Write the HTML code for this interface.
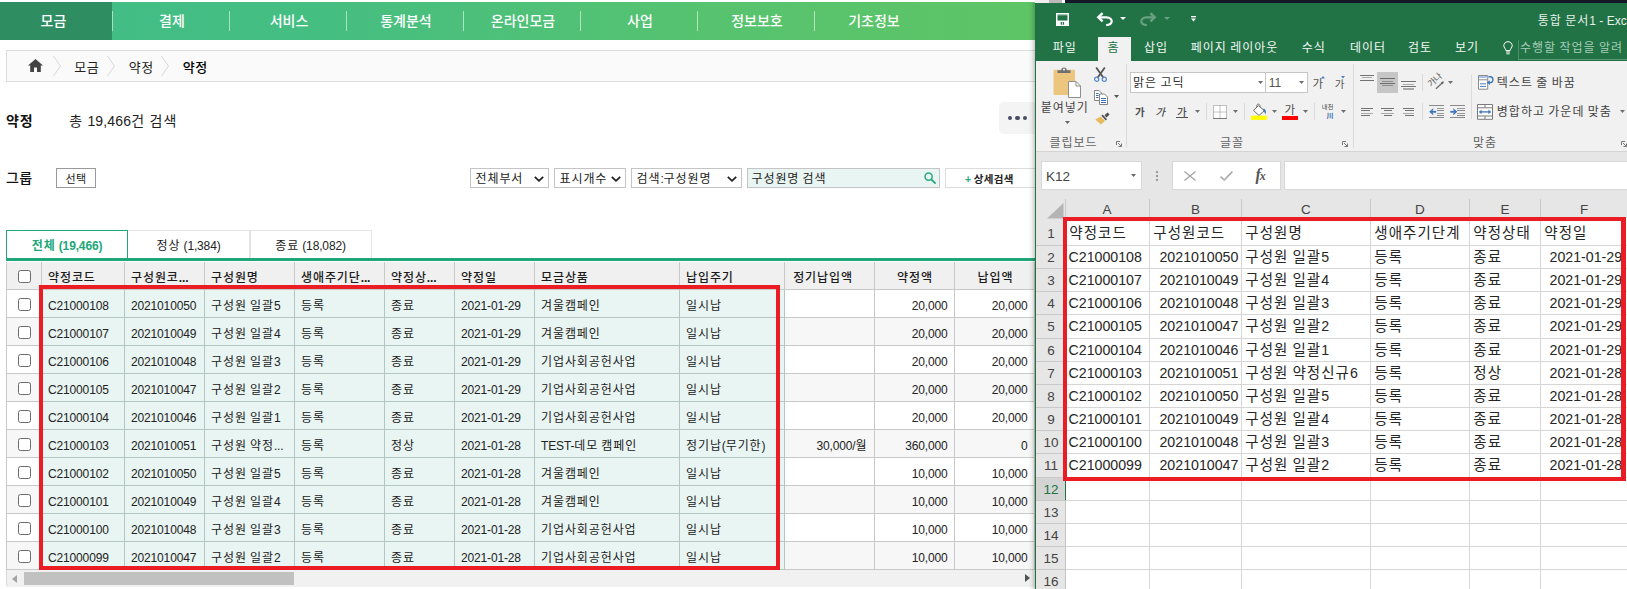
<!DOCTYPE html>
<html lang="ko"><head><meta charset="utf-8"><title>약정</title>
<style>
*{box-sizing:border-box}
html,body{margin:0;padding:0}
body{width:1627px;height:589px;position:relative;overflow:hidden;background:#fff;font-family:"Liberation Sans","Noto Sans CJK KR",sans-serif;font-size:12px;color:#222}
.abs,.web div,.xl div,.web span.p,.xl span.p{position:absolute}
.web{position:absolute;left:0;top:0;width:1035px;height:589px;overflow:hidden;background:#fff}
.xl{position:absolute;left:1035px;top:0;width:592px;height:589px;overflow:hidden;background:#e6e6e6}
.k{letter-spacing:.9px}
.t{white-space:nowrap;line-height:1}
svg{position:absolute;overflow:visible}

.web .t{letter-spacing:-.15px}

.k14{letter-spacing:0}
.k13{letter-spacing:.4px}
.k14b{letter-spacing:1.3px}
.k0{letter-spacing:.3px}
.kx{letter-spacing:1.05px;font-size:14.5px}
.kx12{letter-spacing:1px}
.kx13{letter-spacing:0}
.kt12{letter-spacing:1px}
</style></head>
<body>
<div class="web">
<div style="left:0;top:2px;width:1035px;height:38px;background:linear-gradient(90deg,#41bd86 0%,#45be82 30%,#57c36f 70%,#5ec566 100%)"></div>
<div style="left:0;top:2px;width:112px;height:38px;background:#2f8d62"></div>
<div class="t" style="left:-6.5px;top:13px;width:120px;text-align:center;font-size:14px;font-weight:500;color:#fff;line-height:16px"><span class="k14">모금</span></div>
<div style="left:112.0px;top:11px;width:1px;height:20px;background:rgba(255,255,255,.55)"></div>
<div class="t" style="left:112.0px;top:13px;width:120px;text-align:center;font-size:14px;font-weight:500;color:#fff;line-height:16px"><span class="k14">결제</span></div>
<div style="left:229.0px;top:11px;width:1px;height:20px;background:rgba(255,255,255,.55)"></div>
<div class="t" style="left:229.0px;top:13px;width:120px;text-align:center;font-size:14px;font-weight:500;color:#fff;line-height:16px"><span class="k14">서비스</span></div>
<div style="left:346.0px;top:11px;width:1px;height:20px;background:rgba(255,255,255,.55)"></div>
<div class="t" style="left:346.0px;top:13px;width:120px;text-align:center;font-size:14px;font-weight:500;color:#fff;line-height:16px"><span class="k14">통계분석</span></div>
<div style="left:463.0px;top:11px;width:1px;height:20px;background:rgba(255,255,255,.55)"></div>
<div class="t" style="left:463.0px;top:13px;width:120px;text-align:center;font-size:14px;font-weight:500;color:#fff;line-height:16px"><span class="k14">온라인모금</span></div>
<div style="left:580.0px;top:11px;width:1px;height:20px;background:rgba(255,255,255,.55)"></div>
<div class="t" style="left:580.0px;top:13px;width:120px;text-align:center;font-size:14px;font-weight:500;color:#fff;line-height:16px"><span class="k14">사업</span></div>
<div style="left:697.0px;top:11px;width:1px;height:20px;background:rgba(255,255,255,.55)"></div>
<div class="t" style="left:697.0px;top:13px;width:120px;text-align:center;font-size:14px;font-weight:500;color:#fff;line-height:16px"><span class="k14">정보보호</span></div>
<div style="left:814.0px;top:11px;width:1px;height:20px;background:rgba(255,255,255,.55)"></div>
<div class="t" style="left:814.0px;top:13px;width:120px;text-align:center;font-size:14px;font-weight:500;color:#fff;line-height:16px"><span class="k14">기초정보</span></div>
<div style="left:6px;top:50px;width:1040px;height:32px;background:#fafafa;border:1px solid #dcdcdc"></div>
<svg style="left:28px;top:59px" width="15" height="13" viewBox="0 0 15 13"><path d="M7.5 0 L0 6.6 H2.2 V13 H6 V8.6 H9 V13 H12.8 V6.6 H15 Z" fill="#444"/></svg>
<svg style="left:53px;top:56px" width="8" height="20" viewBox="0 0 8 20"><path d="M0.5 0 L7.5 10 L0.5 20" fill="none" stroke="#d8d8d8" stroke-width="1"/></svg>
<svg style="left:107px;top:56px" width="8" height="20" viewBox="0 0 8 20"><path d="M0.5 0 L7.5 10 L0.5 20" fill="none" stroke="#d8d8d8" stroke-width="1"/></svg>
<svg style="left:161px;top:56px" width="8" height="20" viewBox="0 0 8 20"><path d="M0.5 0 L7.5 10 L0.5 20" fill="none" stroke="#d8d8d8" stroke-width="1"/></svg>
<div class="t" style="left:74.3px;top:60px;font-size:13px;line-height:15px"><span class="k13">모금</span></div>
<div class="t" style="left:128.8px;top:60px;font-size:13px;line-height:15px"><span class="k13">약정</span></div>
<div class="t" style="left:182.8px;top:60px;font-size:13px;line-height:15px;font-weight:500;color:#000"><span class="k13">약정</span></div>
<div class="t" style="left:6px;top:113px;font-size:14px;line-height:16px;font-weight:bold;color:#111"><span class="k">약정</span></div>
<div class="t" style="left:69.2px;top:113px;font-size:14px;line-height:16px;color:#222;letter-spacing:.15px"><span class="k14b">총</span> 19,466<span class="k14b">건</span> <span class="k14b">검색</span></div>
<div style="left:999px;top:102px;width:50px;height:32px;background:#f4f4f4;border-radius:5px"></div>
<div style="left:1008.0px;top:115.8px;width:4.4px;height:4.4px;border-radius:50%;background:#474d66"></div>
<div style="left:1015.3px;top:115.8px;width:4.4px;height:4.4px;border-radius:50%;background:#474d66"></div>
<div style="left:1022.6px;top:115.8px;width:4.4px;height:4.4px;border-radius:50%;background:#474d66"></div>
<div class="t" style="left:6px;top:170px;font-size:14px;line-height:16px;font-weight:500;color:#111"><span class="k13">그룹</span></div>
<div style="left:56px;top:168px;width:40px;height:20px;border:1px solid #999;background:#fff"></div>
<div class="t" style="left:56px;top:174px;width:40px;text-align:center;font-size:11px;line-height:11px"><span class="k0">선택</span></div>
<div style="left:470.0px;top:168px;width:79.0px;height:20px;border:1px solid #c4c4c4;background:#fff"></div>
<div class="t" style="left:475.5px;top:172px;font-size:12px;line-height:14px;color:#222"><span class="k">전체부서</span></div>
<svg style="left:534.0px;top:175.5px" width="10" height="6" viewBox="0 0 10 6"><path d="M0.8 0.8 L5 4.8 L9.2 0.8" fill="none" stroke="#222" stroke-width="1.8"/></svg>
<div style="left:554.0px;top:168px;width:72.0px;height:20px;border:1px solid #c4c4c4;background:#fff"></div>
<div class="t" style="left:559.5px;top:172px;font-size:12px;line-height:14px;color:#222"><span class="k">표시개수</span></div>
<svg style="left:611.0px;top:175.5px" width="10" height="6" viewBox="0 0 10 6"><path d="M0.8 0.8 L5 4.8 L9.2 0.8" fill="none" stroke="#222" stroke-width="1.8"/></svg>
<div style="left:631.0px;top:168px;width:111.0px;height:20px;border:1px solid #c4c4c4;background:#fff"></div>
<div class="t" style="left:636.5px;top:172px;font-size:12px;line-height:14px;color:#222"><span class="k">검색</span>:<span class="k">구성원명</span></div>
<svg style="left:727.0px;top:175.5px" width="10" height="6" viewBox="0 0 10 6"><path d="M0.8 0.8 L5 4.8 L9.2 0.8" fill="none" stroke="#222" stroke-width="1.8"/></svg>
<div style="left:747px;top:168px;width:193px;height:20px;border:1px solid #c4c4c4;background:#e9f5f2"></div>
<div class="t" style="left:751.5px;top:172px;font-size:12px;line-height:14px;color:#222"><span class="k">구성원명</span> <span class="k">검색</span></div>
<svg style="left:924px;top:172px" width="12" height="12" viewBox="0 0 12 12"><circle cx="4.6" cy="4.6" r="3.6" fill="none" stroke="#2aa981" stroke-width="1.5"/><path d="M7.3 7.3 L11 11" stroke="#2aa981" stroke-width="1.8" stroke-linecap="round"/></svg>
<div style="left:945px;top:168px;width:100px;height:20px;border:1px solid #dcdcdc;background:#fff"></div>
<div class="t" style="left:965px;top:172.5px;font-size:10.5px;line-height:12px;font-weight:bold;color:#222"><span style="color:#2aa981">+</span> <span class="k0">상세검색</span></div>
<div style="left:127px;top:230px;width:123px;height:29px;border:1px solid #e4e4e4;border-bottom:none;background:#fff"></div>
<div style="left:250px;top:230px;width:122px;height:29px;border:1px solid #e4e4e4;border-bottom:none;background:#fff"></div>
<div style="left:6px;top:258px;width:1030px;height:3px;background:#21a67a"></div>
<div style="left:6px;top:230px;width:122px;height:28px;border:1px solid #21a67a;border-bottom:none;background:#fff"></div>
<div class="t" style="left:6px;top:239px;width:122px;text-align:center;font-size:12px;line-height:14px;font-weight:bold;color:#21a67a"><span class="k">전체</span> (19,466)</div>
<div class="t" style="left:127px;top:239px;width:123px;text-align:center;font-size:12px;line-height:14px;color:#222"><span class="k">정상</span> (1,384)</div>
<div class="t" style="left:249px;top:239px;width:123px;text-align:center;font-size:12px;line-height:14px;color:#222"><span class="k">종료</span> (18,082)</div>
<div style="left:7px;top:262px;width:1028px;height:27px;background:#f0f0f0"></div>
<div style="left:7px;top:290px;width:1028px;height:28px;background:#fff"></div>
<div style="left:7px;top:318px;width:1028px;height:28px;background:#f7f7f7"></div>
<div style="left:7px;top:346px;width:1028px;height:28px;background:#fff"></div>
<div style="left:7px;top:374px;width:1028px;height:28px;background:#f7f7f7"></div>
<div style="left:7px;top:402px;width:1028px;height:28px;background:#fff"></div>
<div style="left:7px;top:430px;width:1028px;height:28px;background:#f7f7f7"></div>
<div style="left:7px;top:458px;width:1028px;height:28px;background:#fff"></div>
<div style="left:7px;top:486px;width:1028px;height:28px;background:#f7f7f7"></div>
<div style="left:7px;top:514px;width:1028px;height:28px;background:#fff"></div>
<div style="left:7px;top:542px;width:1028px;height:28px;background:#f7f7f7"></div>
<div style="left:42px;top:290px;width:742px;height:279px;background:#e9f5f2"></div>
<div style="left:7px;top:289px;width:1028px;height:1px;background:#c9c9c9"></div>
<div style="left:7px;top:317px;width:1028px;height:1px;background:#c9c9c9"></div>
<div style="left:41px;top:317px;width:744px;height:1px;background:#b4c6c2"></div>
<div style="left:7px;top:345px;width:1028px;height:1px;background:#c9c9c9"></div>
<div style="left:41px;top:345px;width:744px;height:1px;background:#b4c6c2"></div>
<div style="left:7px;top:373px;width:1028px;height:1px;background:#c9c9c9"></div>
<div style="left:41px;top:373px;width:744px;height:1px;background:#b4c6c2"></div>
<div style="left:7px;top:401px;width:1028px;height:1px;background:#c9c9c9"></div>
<div style="left:41px;top:401px;width:744px;height:1px;background:#b4c6c2"></div>
<div style="left:7px;top:429px;width:1028px;height:1px;background:#c9c9c9"></div>
<div style="left:41px;top:429px;width:744px;height:1px;background:#b4c6c2"></div>
<div style="left:7px;top:457px;width:1028px;height:1px;background:#c9c9c9"></div>
<div style="left:41px;top:457px;width:744px;height:1px;background:#b4c6c2"></div>
<div style="left:7px;top:485px;width:1028px;height:1px;background:#c9c9c9"></div>
<div style="left:41px;top:485px;width:744px;height:1px;background:#b4c6c2"></div>
<div style="left:7px;top:513px;width:1028px;height:1px;background:#c9c9c9"></div>
<div style="left:41px;top:513px;width:744px;height:1px;background:#b4c6c2"></div>
<div style="left:7px;top:541px;width:1028px;height:1px;background:#c9c9c9"></div>
<div style="left:41px;top:541px;width:744px;height:1px;background:#b4c6c2"></div>
<div style="left:7px;top:569px;width:1028px;height:1px;background:#c9c9c9"></div>
<div style="left:41px;top:569px;width:744px;height:1px;background:#b4c6c2"></div>
<div style="left:5.5px;top:262px;width:1px;height:308px;background:#c9c9c9"></div>
<div style="left:40.5px;top:262px;width:1px;height:308px;background:#c9c9c9"></div>
<div style="left:40.5px;top:290px;width:1px;height:280px;background:#b4c6c2"></div>
<div style="left:123.5px;top:262px;width:1px;height:308px;background:#c9c9c9"></div>
<div style="left:123.5px;top:290px;width:1px;height:280px;background:#b4c6c2"></div>
<div style="left:203.5px;top:262px;width:1px;height:308px;background:#c9c9c9"></div>
<div style="left:203.5px;top:290px;width:1px;height:280px;background:#b4c6c2"></div>
<div style="left:293.5px;top:262px;width:1px;height:308px;background:#c9c9c9"></div>
<div style="left:293.5px;top:290px;width:1px;height:280px;background:#b4c6c2"></div>
<div style="left:383.5px;top:262px;width:1px;height:308px;background:#c9c9c9"></div>
<div style="left:383.5px;top:290px;width:1px;height:280px;background:#b4c6c2"></div>
<div style="left:453.5px;top:262px;width:1px;height:308px;background:#c9c9c9"></div>
<div style="left:453.5px;top:290px;width:1px;height:280px;background:#b4c6c2"></div>
<div style="left:533.5px;top:262px;width:1px;height:308px;background:#c9c9c9"></div>
<div style="left:533.5px;top:290px;width:1px;height:280px;background:#b4c6c2"></div>
<div style="left:678.5px;top:262px;width:1px;height:308px;background:#c9c9c9"></div>
<div style="left:678.5px;top:290px;width:1px;height:280px;background:#b4c6c2"></div>
<div style="left:783.5px;top:262px;width:1px;height:308px;background:#c9c9c9"></div>
<div style="left:783.5px;top:290px;width:1px;height:280px;background:#b4c6c2"></div>
<div style="left:873.5px;top:262px;width:1px;height:308px;background:#c9c9c9"></div>
<div style="left:953.5px;top:262px;width:1px;height:308px;background:#c9c9c9"></div>
<div style="left:1033.5px;top:262px;width:1px;height:308px;background:#c9c9c9"></div>
<div class="t" style="left:48.0px;top:271px;font-weight:500;font-size:12px;line-height:14px;color:#1c1c1c"><span class="k">약정코드</span></div>
<div class="t" style="left:131.0px;top:271px;font-weight:500;font-size:12px;line-height:14px;color:#1c1c1c"><span class="k">구성원코</span><b>...</b></div>
<div class="t" style="left:211.0px;top:271px;font-weight:500;font-size:12px;line-height:14px;color:#1c1c1c"><span class="k">구성원명</span></div>
<div class="t" style="left:301.0px;top:271px;font-weight:500;font-size:12px;line-height:14px;color:#1c1c1c"><span class="k">생애주기단</span><b>...</b></div>
<div class="t" style="left:391.0px;top:271px;font-weight:500;font-size:12px;line-height:14px;color:#1c1c1c"><span class="k">약정상</span><b>...</b></div>
<div class="t" style="left:461.0px;top:271px;font-weight:500;font-size:12px;line-height:14px;color:#1c1c1c"><span class="k">약정일</span></div>
<div class="t" style="left:541.0px;top:271px;font-weight:500;font-size:12px;line-height:14px;color:#1c1c1c"><span class="k">모금상품</span></div>
<div class="t" style="left:686.0px;top:271px;font-weight:500;font-size:12px;line-height:14px;color:#1c1c1c"><span class="k">납입주기</span></div>
<div class="t" style="left:778.0px;top:271px;width:90.0px;text-align:center;font-weight:500;font-size:12px;line-height:14px;color:#1c1c1c"><span class="k">정기납입액</span></div>
<div class="t" style="left:875.0px;top:271px;width:80.0px;text-align:center;font-weight:500;font-size:12px;line-height:14px;color:#1c1c1c"><span class="k">약정액</span></div>
<div class="t" style="left:955.5px;top:271px;width:80.0px;text-align:center;font-weight:500;font-size:12px;line-height:14px;color:#1c1c1c"><span class="k">납입액</span></div>
<div style="left:18px;top:270px;width:13px;height:13px;border:1px solid #6b6b6b;border-radius:2.5px;background:#fff"></div>
<div style="left:18px;top:298px;width:13px;height:13px;border:1px solid #6b6b6b;border-radius:2.5px;background:#fff"></div>
<div style="left:18px;top:326px;width:13px;height:13px;border:1px solid #6b6b6b;border-radius:2.5px;background:#fff"></div>
<div style="left:18px;top:354px;width:13px;height:13px;border:1px solid #6b6b6b;border-radius:2.5px;background:#fff"></div>
<div style="left:18px;top:382px;width:13px;height:13px;border:1px solid #6b6b6b;border-radius:2.5px;background:#fff"></div>
<div style="left:18px;top:410px;width:13px;height:13px;border:1px solid #6b6b6b;border-radius:2.5px;background:#fff"></div>
<div style="left:18px;top:438px;width:13px;height:13px;border:1px solid #6b6b6b;border-radius:2.5px;background:#fff"></div>
<div style="left:18px;top:466px;width:13px;height:13px;border:1px solid #6b6b6b;border-radius:2.5px;background:#fff"></div>
<div style="left:18px;top:494px;width:13px;height:13px;border:1px solid #6b6b6b;border-radius:2.5px;background:#fff"></div>
<div style="left:18px;top:522px;width:13px;height:13px;border:1px solid #6b6b6b;border-radius:2.5px;background:#fff"></div>
<div style="left:18px;top:550px;width:13px;height:13px;border:1px solid #6b6b6b;border-radius:2.5px;background:#fff"></div>
<div class="t" style="left:48.0px;top:299px;font-size:12px;line-height:14px;color:#222">C21000108</div>
<div class="t" style="left:131.0px;top:299px;font-size:12px;line-height:14px;color:#222">2021010050</div>
<div class="t" style="left:211.0px;top:299px;font-size:12px;line-height:14px;color:#222"><span class="k">구성원</span> <span class="k">일괄</span>5</div>
<div class="t" style="left:301.0px;top:299px;font-size:12px;line-height:14px;color:#222"><span class="k">등록</span></div>
<div class="t" style="left:391.0px;top:299px;font-size:12px;line-height:14px;color:#222"><span class="k">종료</span></div>
<div class="t" style="left:461.0px;top:299px;font-size:12px;line-height:14px;color:#222">2021-01-29</div>
<div class="t" style="left:541.0px;top:299px;font-size:12px;line-height:14px;color:#222"><span class="k">겨울캠페인</span></div>
<div class="t" style="left:686.0px;top:299px;font-size:12px;line-height:14px;color:#222"><span class="k">일시납</span></div>
<div class="t" style="left:874.0px;top:299px;width:73.5px;text-align:right;font-size:12px;line-height:14px;color:#222">20,000</div>
<div class="t" style="left:954.0px;top:299px;width:73.5px;text-align:right;font-size:12px;line-height:14px;color:#222">20,000</div>
<div class="t" style="left:48.0px;top:327px;font-size:12px;line-height:14px;color:#222">C21000107</div>
<div class="t" style="left:131.0px;top:327px;font-size:12px;line-height:14px;color:#222">2021010049</div>
<div class="t" style="left:211.0px;top:327px;font-size:12px;line-height:14px;color:#222"><span class="k">구성원</span> <span class="k">일괄</span>4</div>
<div class="t" style="left:301.0px;top:327px;font-size:12px;line-height:14px;color:#222"><span class="k">등록</span></div>
<div class="t" style="left:391.0px;top:327px;font-size:12px;line-height:14px;color:#222"><span class="k">종료</span></div>
<div class="t" style="left:461.0px;top:327px;font-size:12px;line-height:14px;color:#222">2021-01-29</div>
<div class="t" style="left:541.0px;top:327px;font-size:12px;line-height:14px;color:#222"><span class="k">겨울캠페인</span></div>
<div class="t" style="left:686.0px;top:327px;font-size:12px;line-height:14px;color:#222"><span class="k">일시납</span></div>
<div class="t" style="left:874.0px;top:327px;width:73.5px;text-align:right;font-size:12px;line-height:14px;color:#222">20,000</div>
<div class="t" style="left:954.0px;top:327px;width:73.5px;text-align:right;font-size:12px;line-height:14px;color:#222">20,000</div>
<div class="t" style="left:48.0px;top:355px;font-size:12px;line-height:14px;color:#222">C21000106</div>
<div class="t" style="left:131.0px;top:355px;font-size:12px;line-height:14px;color:#222">2021010048</div>
<div class="t" style="left:211.0px;top:355px;font-size:12px;line-height:14px;color:#222"><span class="k">구성원</span> <span class="k">일괄</span>3</div>
<div class="t" style="left:301.0px;top:355px;font-size:12px;line-height:14px;color:#222"><span class="k">등록</span></div>
<div class="t" style="left:391.0px;top:355px;font-size:12px;line-height:14px;color:#222"><span class="k">종료</span></div>
<div class="t" style="left:461.0px;top:355px;font-size:12px;line-height:14px;color:#222">2021-01-29</div>
<div class="t" style="left:541.0px;top:355px;font-size:12px;line-height:14px;color:#222"><span class="k">기업사회공헌사업</span></div>
<div class="t" style="left:686.0px;top:355px;font-size:12px;line-height:14px;color:#222"><span class="k">일시납</span></div>
<div class="t" style="left:874.0px;top:355px;width:73.5px;text-align:right;font-size:12px;line-height:14px;color:#222">20,000</div>
<div class="t" style="left:954.0px;top:355px;width:73.5px;text-align:right;font-size:12px;line-height:14px;color:#222">20,000</div>
<div class="t" style="left:48.0px;top:383px;font-size:12px;line-height:14px;color:#222">C21000105</div>
<div class="t" style="left:131.0px;top:383px;font-size:12px;line-height:14px;color:#222">2021010047</div>
<div class="t" style="left:211.0px;top:383px;font-size:12px;line-height:14px;color:#222"><span class="k">구성원</span> <span class="k">일괄</span>2</div>
<div class="t" style="left:301.0px;top:383px;font-size:12px;line-height:14px;color:#222"><span class="k">등록</span></div>
<div class="t" style="left:391.0px;top:383px;font-size:12px;line-height:14px;color:#222"><span class="k">종료</span></div>
<div class="t" style="left:461.0px;top:383px;font-size:12px;line-height:14px;color:#222">2021-01-29</div>
<div class="t" style="left:541.0px;top:383px;font-size:12px;line-height:14px;color:#222"><span class="k">기업사회공헌사업</span></div>
<div class="t" style="left:686.0px;top:383px;font-size:12px;line-height:14px;color:#222"><span class="k">일시납</span></div>
<div class="t" style="left:874.0px;top:383px;width:73.5px;text-align:right;font-size:12px;line-height:14px;color:#222">20,000</div>
<div class="t" style="left:954.0px;top:383px;width:73.5px;text-align:right;font-size:12px;line-height:14px;color:#222">20,000</div>
<div class="t" style="left:48.0px;top:411px;font-size:12px;line-height:14px;color:#222">C21000104</div>
<div class="t" style="left:131.0px;top:411px;font-size:12px;line-height:14px;color:#222">2021010046</div>
<div class="t" style="left:211.0px;top:411px;font-size:12px;line-height:14px;color:#222"><span class="k">구성원</span> <span class="k">일괄</span>1</div>
<div class="t" style="left:301.0px;top:411px;font-size:12px;line-height:14px;color:#222"><span class="k">등록</span></div>
<div class="t" style="left:391.0px;top:411px;font-size:12px;line-height:14px;color:#222"><span class="k">종료</span></div>
<div class="t" style="left:461.0px;top:411px;font-size:12px;line-height:14px;color:#222">2021-01-29</div>
<div class="t" style="left:541.0px;top:411px;font-size:12px;line-height:14px;color:#222"><span class="k">기업사회공헌사업</span></div>
<div class="t" style="left:686.0px;top:411px;font-size:12px;line-height:14px;color:#222"><span class="k">일시납</span></div>
<div class="t" style="left:874.0px;top:411px;width:73.5px;text-align:right;font-size:12px;line-height:14px;color:#222">20,000</div>
<div class="t" style="left:954.0px;top:411px;width:73.5px;text-align:right;font-size:12px;line-height:14px;color:#222">20,000</div>
<div class="t" style="left:48.0px;top:439px;font-size:12px;line-height:14px;color:#222">C21000103</div>
<div class="t" style="left:131.0px;top:439px;font-size:12px;line-height:14px;color:#222">2021010051</div>
<div class="t" style="left:211.0px;top:439px;font-size:12px;line-height:14px;color:#222"><span class="k">구성원</span> <span class="k">약정</span>...</div>
<div class="t" style="left:301.0px;top:439px;font-size:12px;line-height:14px;color:#222"><span class="k">등록</span></div>
<div class="t" style="left:391.0px;top:439px;font-size:12px;line-height:14px;color:#222"><span class="k">정상</span></div>
<div class="t" style="left:461.0px;top:439px;font-size:12px;line-height:14px;color:#222">2021-01-28</div>
<div class="t" style="left:541.0px;top:439px;font-size:12px;line-height:14px;color:#222">TEST-<span class="k">데모</span> <span class="k">캠페인</span></div>
<div class="t" style="left:686.0px;top:439px;font-size:12px;line-height:14px;color:#222"><span class="k">정기납</span>(<span class="k">무기한</span>)</div>
<div class="t" style="left:784.0px;top:439px;width:83.5px;text-align:right;font-size:12px;line-height:14px;color:#222">30,000/<span class="k">월</span></div>
<div class="t" style="left:874.0px;top:439px;width:73.5px;text-align:right;font-size:12px;line-height:14px;color:#222">360,000</div>
<div class="t" style="left:954.0px;top:439px;width:73.5px;text-align:right;font-size:12px;line-height:14px;color:#222">0</div>
<div class="t" style="left:48.0px;top:467px;font-size:12px;line-height:14px;color:#222">C21000102</div>
<div class="t" style="left:131.0px;top:467px;font-size:12px;line-height:14px;color:#222">2021010050</div>
<div class="t" style="left:211.0px;top:467px;font-size:12px;line-height:14px;color:#222"><span class="k">구성원</span> <span class="k">일괄</span>5</div>
<div class="t" style="left:301.0px;top:467px;font-size:12px;line-height:14px;color:#222"><span class="k">등록</span></div>
<div class="t" style="left:391.0px;top:467px;font-size:12px;line-height:14px;color:#222"><span class="k">종료</span></div>
<div class="t" style="left:461.0px;top:467px;font-size:12px;line-height:14px;color:#222">2021-01-28</div>
<div class="t" style="left:541.0px;top:467px;font-size:12px;line-height:14px;color:#222"><span class="k">겨울캠페인</span></div>
<div class="t" style="left:686.0px;top:467px;font-size:12px;line-height:14px;color:#222"><span class="k">일시납</span></div>
<div class="t" style="left:874.0px;top:467px;width:73.5px;text-align:right;font-size:12px;line-height:14px;color:#222">10,000</div>
<div class="t" style="left:954.0px;top:467px;width:73.5px;text-align:right;font-size:12px;line-height:14px;color:#222">10,000</div>
<div class="t" style="left:48.0px;top:495px;font-size:12px;line-height:14px;color:#222">C21000101</div>
<div class="t" style="left:131.0px;top:495px;font-size:12px;line-height:14px;color:#222">2021010049</div>
<div class="t" style="left:211.0px;top:495px;font-size:12px;line-height:14px;color:#222"><span class="k">구성원</span> <span class="k">일괄</span>4</div>
<div class="t" style="left:301.0px;top:495px;font-size:12px;line-height:14px;color:#222"><span class="k">등록</span></div>
<div class="t" style="left:391.0px;top:495px;font-size:12px;line-height:14px;color:#222"><span class="k">종료</span></div>
<div class="t" style="left:461.0px;top:495px;font-size:12px;line-height:14px;color:#222">2021-01-28</div>
<div class="t" style="left:541.0px;top:495px;font-size:12px;line-height:14px;color:#222"><span class="k">겨울캠페인</span></div>
<div class="t" style="left:686.0px;top:495px;font-size:12px;line-height:14px;color:#222"><span class="k">일시납</span></div>
<div class="t" style="left:874.0px;top:495px;width:73.5px;text-align:right;font-size:12px;line-height:14px;color:#222">10,000</div>
<div class="t" style="left:954.0px;top:495px;width:73.5px;text-align:right;font-size:12px;line-height:14px;color:#222">10,000</div>
<div class="t" style="left:48.0px;top:523px;font-size:12px;line-height:14px;color:#222">C21000100</div>
<div class="t" style="left:131.0px;top:523px;font-size:12px;line-height:14px;color:#222">2021010048</div>
<div class="t" style="left:211.0px;top:523px;font-size:12px;line-height:14px;color:#222"><span class="k">구성원</span> <span class="k">일괄</span>3</div>
<div class="t" style="left:301.0px;top:523px;font-size:12px;line-height:14px;color:#222"><span class="k">등록</span></div>
<div class="t" style="left:391.0px;top:523px;font-size:12px;line-height:14px;color:#222"><span class="k">종료</span></div>
<div class="t" style="left:461.0px;top:523px;font-size:12px;line-height:14px;color:#222">2021-01-28</div>
<div class="t" style="left:541.0px;top:523px;font-size:12px;line-height:14px;color:#222"><span class="k">기업사회공헌사업</span></div>
<div class="t" style="left:686.0px;top:523px;font-size:12px;line-height:14px;color:#222"><span class="k">일시납</span></div>
<div class="t" style="left:874.0px;top:523px;width:73.5px;text-align:right;font-size:12px;line-height:14px;color:#222">10,000</div>
<div class="t" style="left:954.0px;top:523px;width:73.5px;text-align:right;font-size:12px;line-height:14px;color:#222">10,000</div>
<div class="t" style="left:48.0px;top:551px;font-size:12px;line-height:14px;color:#222">C21000099</div>
<div class="t" style="left:131.0px;top:551px;font-size:12px;line-height:14px;color:#222">2021010047</div>
<div class="t" style="left:211.0px;top:551px;font-size:12px;line-height:14px;color:#222"><span class="k">구성원</span> <span class="k">일괄</span>2</div>
<div class="t" style="left:301.0px;top:551px;font-size:12px;line-height:14px;color:#222"><span class="k">등록</span></div>
<div class="t" style="left:391.0px;top:551px;font-size:12px;line-height:14px;color:#222"><span class="k">종료</span></div>
<div class="t" style="left:461.0px;top:551px;font-size:12px;line-height:14px;color:#222">2021-01-28</div>
<div class="t" style="left:541.0px;top:551px;font-size:12px;line-height:14px;color:#222"><span class="k">기업사회공헌사업</span></div>
<div class="t" style="left:686.0px;top:551px;font-size:12px;line-height:14px;color:#222"><span class="k">일시납</span></div>
<div class="t" style="left:874.0px;top:551px;width:73.5px;text-align:right;font-size:12px;line-height:14px;color:#222">10,000</div>
<div class="t" style="left:954.0px;top:551px;width:73.5px;text-align:right;font-size:12px;line-height:14px;color:#222">10,000</div>
<div style="left:39px;top:285px;width:741px;height:285px;border:solid #ec1c24;border-width:4px 4px 4px 4px"></div>
<div style="left:6px;top:570px;width:1029px;height:17px;background:#f1f1f1;border-left:1px solid #d6d6d6;border-bottom-left-radius:3px"></div>
<div style="left:24px;top:572px;width:270px;height:13px;background:#c1c1c1"></div>
<svg style="left:12px;top:575px" width="5" height="8" viewBox="0 0 5 8"><path d="M5 0 L0 4 L5 8Z" fill="#a3a3a3"/></svg>
<svg style="left:1025px;top:574px" width="5" height="8" viewBox="0 0 5 8"><path d="M0 0 L5 4 L0 8Z" fill="#505050"/></svg>
<div style="left:1028px;top:3px;width:7px;height:586px;background:linear-gradient(90deg,rgba(0,0,0,0),rgba(0,0,0,.05) 50%,rgba(0,0,0,.2))"></div>
</div>
<div class="xl">
<div style="left:0;top:0;width:14px;height:3px;background:#f3eff0"></div>
<div style="left:14px;top:0;width:13px;height:3px;background:#bdb8b9"></div>
<div style="left:27px;top:0;width:2.5px;height:3px;background:#f5f5f5"></div>
<div style="left:29.5px;top:0;width:570px;height:3px;background:#151826"></div>
<div style="left:0;top:3px;width:592px;height:58px;background:#217346"></div>
<div style="left:0;top:61px;width:592px;height:90px;background:#f1f1f1"></div>
<div style="left:0;top:150.5px;width:592px;height:1px;background:#d4d4d4"></div>
<div style="left:62.5px;top:37px;width:33.5px;height:24px;background:#f1f1f1"></div>
<svg style="left:20.6px;top:12.500px" width="13.200" height="13.200" viewBox="0 0 14 14"><rect x="0.8" y="0.8" width="12.2" height="12.2" fill="none" stroke="#fff" stroke-width="1.6"/><rect x="1.500" y="1.800" width="11" height="0.8" fill="#fff" opacity="0.5"/><rect x="0.8" y="8" width="12.2" height="5" fill="#fff"/><rect x="5" y="9.6" width="3.600" height="2.800" fill="#217346"/><rect x="6.500" y="9.6" width="0.8" height="2.800" fill="#fff"/></svg>
<svg style="left:62.0px;top:12px" width="16" height="14" viewBox="0 0 16 14"><path d="M5.600 1.200 L1.200 5.300 L5.600 9.400" fill="none" stroke="#fff" stroke-width="2.300" stroke-linejoin="miter"/><path d="M1.500 5.300 H9.500 C13 5.300 15 7.600 14.700 9.700 C14.400 12 11.800 13 9.200 13.100" fill="none" stroke="#fff" stroke-width="2.200"/></svg>
<svg style="left:85.0px;top:17.3px" width="6" height="3" viewBox="0 0 6 3"><path d="M0 0 H6 L3 3Z" fill="#fff"/></svg>
<svg style="left:104.8px;top:12px" width="16" height="14" viewBox="0 0 16 14" opacity="0.32"><path d="M10.400 1.200 L14.800 5.300 L10.400 9.400" fill="none" stroke="#fff" stroke-width="2.300" stroke-linejoin="miter"/><path d="M14.500 5.300 H6.500 C3 5.300 1 7.600 1.300 9.700 C1.600 12 4.200 13 6.800 13.100" fill="none" stroke="#fff" stroke-width="2.200"/></svg>
<svg style="left:128.8px;top:17.3px" width="6" height="3" viewBox="0 0 6 3" opacity="0.32"><path d="M0 0 H6 L3 3Z" fill="#fff"/></svg>
<svg style="left:156.3px;top:16.3px" width="5" height="6" viewBox="0 0 5 6"><rect x="0" y="0" width="5" height="1.300" fill="#fff"/><path d="M0 2.600 H5 L2.500 5.400Z" fill="#fff"/></svg>
<div class="t" style="left:502.8px;top:14px;font-size:12px;line-height:15px;color:#e6f0ea"><span class="kt12">통합</span> <span class="kt12">문서</span>1 - Excel</div>
<div class="t" style="left:17.8px;top:40.500px;font-size:12px;line-height:15px;color:#f2f7f4"><span class="kt12">파일</span></div>
<div class="t" style="left:72.5px;top:40.500px;font-size:12px;line-height:15px;color:#217346"><span class="kt12">홈</span></div>
<div class="t" style="left:109.0px;top:40.500px;font-size:12px;line-height:15px;color:#f2f7f4"><span class="kt12">삽입</span></div>
<div class="t" style="left:155.7px;top:40.500px;font-size:12px;line-height:15px;color:#f2f7f4"><span class="kt12">페이지</span> <span class="kt12">레이아웃</span></div>
<div class="t" style="left:266.8px;top:40.500px;font-size:12px;line-height:15px;color:#f2f7f4"><span class="kt12">수식</span></div>
<div class="t" style="left:315.0px;top:40.500px;font-size:12px;line-height:15px;color:#f2f7f4"><span class="kt12">데이터</span></div>
<div class="t" style="left:373.0px;top:40.500px;font-size:12px;line-height:15px;color:#f2f7f4"><span class="kt12">검토</span></div>
<div class="t" style="left:420.0px;top:40.500px;font-size:12px;line-height:15px;color:#f2f7f4"><span class="kt12">보기</span></div>
<svg style="left:468.0px;top:41px" width="10" height="14" viewBox="0 0 10 14"><path d="M5 0.7 C2.3 0.7 0.8 2.7 0.8 4.6 C0.8 6.6 2.6 7.6 2.9 9.6 H7.1 C7.4 7.6 9.2 6.6 9.2 4.6 C9.2 2.7 7.7 0.7 5 0.7Z" fill="none" stroke="#fff" stroke-width="1"/><path d="M3 11 H7 M3.4 12.8 H6.6" stroke="#fff" stroke-width="1"/></svg>
<div style="left:483.0px;top:40px;width:120px;height:20px;border-left:1px solid #4d8f6a;border-bottom:1px solid #5a9875"></div>
<div class="t" style="left:485.0px;top:40.500px;font-size:12px;line-height:15px;color:#a8ccb8"><span class="kt12">수행할</span> <span class="kt12">작업을</span> <span class="kt12">알려</span> <span class="kt12">주세요</span></div>
<svg style="left:18.0px;top:66px" width="28" height="32" viewBox="0 0 28 32"><rect x="0.500" y="3.800" width="21.500" height="25.200" rx="1.200" fill="#ecc67f"/><path d="M4.500 7 V4.200 H8.300 A2.700 2.700 0 0 1 13.700 4.200 H17.500 V7Z" fill="#6f6f6f"/><circle cx="11" cy="3.600" r="1.100" fill="#f1f1f1"/><path d="M15.500 15.500 H23 L27.500 20 V31.500 H15.500Z" fill="#fff" stroke="#8e8e8e" stroke-width="1"/><path d="M23 15.500 V20 H27.500" fill="none" stroke="#8e8e8e" stroke-width="1"/></svg>
<div class="t" style="left:-0.2px;top:101px;width:60px;text-align:center;font-size:12px;line-height:14px;color:#444"><span class="kx12">붙여넣기</span></div>
<svg style="left:29.5px;top:121px" width="5" height="3" viewBox="0 0 5 3"><path d="M0 0 H5 L2.5 3Z" fill="#666"/></svg>
<svg style="left:59.0px;top:67px" width="13" height="15" viewBox="0 0 13 15"><path d="M2.2 0.5 L9.6 11 M10.8 0.5 L3.4 11" stroke="#555" stroke-width="1.800" fill="none"/><circle cx="2.7" cy="12.2" r="2.100" fill="none" stroke="#5688c7" stroke-width="1.2"/><circle cx="10.3" cy="12.2" r="2.100" fill="none" stroke="#5688c7" stroke-width="1.2"/></svg>
<svg style="left:59.0px;top:89.500px" width="14" height="15" viewBox="0 0 14 15"><path d="M0.5 0.5 H5 L7.5 3 V10.5 H0.5Z" fill="#fff" stroke="#858585"/><path d="M5.5 4 H10.5 L13.5 7 V14.5 H5.5Z" fill="#fff" stroke="#858585"/><path d="M7 8.5 H12 M7 10.5 H12 M7 12.5 H12 M2 3.5 H4.500 M2 5.5 H4.500 M2 7.5 H4.500" stroke="#3d6fb4" stroke-width="1"/></svg>
<svg style="left:79.0px;top:95px" width="5" height="3" viewBox="0 0 5 3"><path d="M0 0 H5 L2.5 3Z" fill="#555"/></svg>
<svg style="left:59.5px;top:112px" width="15" height="13" viewBox="0 0 15 13"><path d="M9.5 3.2 L12.6 0.4 L14.6 2.600 L11.500 5.400Z" fill="#505050"/><path d="M7.6 2.6 L12 7.2 L10.8 8.4 L6.4 3.8Z" fill="#505050"/><path d="M5.600 4.400 L10 9 L5.8 12.600 L0.4 7.4Z" fill="#e9b95c"/></svg>
<div class="t" style="left:14.5px;top:135.5px;font-size:12px;line-height:14px;color:#636363"><span class="kx12">클립보드</span></div>
<svg style="left:80.7px;top:141px" width="6" height="6" viewBox="0 0 6 6"><path d="M0.5 4 V0.500 H4" fill="none" stroke="#777" stroke-width="1"/><path d="M2 2 L5.5 5.5 M5.5 2.500 V5.5 H2.500" fill="none" stroke="#777" stroke-width="1"/></svg>
<div style="left:91.0px;top:64.0px;width:1px;height:83.5px;background:#dadada"></div>
<div style="left:95.3px;top:72px;width:136px;height:21px;border:1px solid #c6c6c6;background:#fff"></div>
<div style="left:230.3px;top:72px;width:42.5px;height:21px;border:1px solid #c6c6c6;background:#fff"></div>
<div class="t" style="left:98.0px;top:75.500px;font-size:12px;line-height:14px;color:#333"><span class="kx12">맑은</span> <span class="kx12">고딕</span></div>
<div class="t" style="left:233.7px;top:75.500px;font-size:12px;line-height:14px;color:#555">11</div>
<svg style="left:222.5px;top:81.0px" width="5" height="3" viewBox="0 0 5 3"><path d="M0 0 H5 L2.5 3Z" fill="#707070"/></svg>
<svg style="left:264.0px;top:81.0px" width="5" height="3" viewBox="0 0 5 3"><path d="M0 0 H5 L2.5 3Z" fill="#707070"/></svg>
<div class="t" style="left:277.5px;top:78.300px;font-size:11.500px;line-height:12px;color:#555">가</div>
<svg style="left:285.6px;top:75.800px" width="4" height="2.500" viewBox="0 0 4 2.5"><path d="M0 2.500 H4 L2 0Z" fill="#4a7fc0"/></svg>
<div class="t" style="left:299.7px;top:79px;font-size:10.500px;line-height:11px;color:#555">가</div>
<svg style="left:305.5px;top:75.800px" width="4" height="2.500" viewBox="0 0 4 2.5"><path d="M0 0 H4 L2 2.500Z" fill="#4a7fc0"/></svg>
<div class="t" style="left:100.0px;top:106.5px;font-size:10.5px;line-height:11px;font-weight:bold;color:#505050">가</div>
<div class="t" style="left:121.3px;top:106.5px;font-size:10.5px;line-height:11px;font-weight:500;transform:skewX(-14deg);color:#505050">가</div>
<div class="t" style="left:142.0px;top:106.5px;font-size:10.5px;line-height:11px;font-weight:500;color:#505050">가</div>
<div style="left:141.3px;top:117.3px;width:11.500px;height:1px;background:#505050"></div>
<svg style="left:159.7px;top:110.2px" width="5" height="3" viewBox="0 0 5 3"><path d="M0 0 H5 L2.5 3Z" fill="#707070"/></svg>
<div style="left:171.0px;top:103.0px;width:1px;height:17.0px;background:#dadada"></div>
<svg style="left:178.0px;top:104.5px" width="14" height="14" viewBox="0 0 14 14"><rect x="0.5" y="0.5" width="13" height="13" fill="#fff"/><path d="M0.5 0.5 H13.5 V13.5 H0.5Z M7 0.5 V13.5 M0.5 7 H13.5" fill="none" stroke="#8a8a8a" stroke-width="1" stroke-dasharray="1 1"/><path d="M0 13.5 H14" stroke="#777" stroke-width="1"/></svg>
<svg style="left:198.3px;top:110.2px" width="5" height="3" viewBox="0 0 5 3"><path d="M0 0 H5 L2.5 3Z" fill="#707070"/></svg>
<div style="left:209.0px;top:103.0px;width:1px;height:17.0px;background:#dadada"></div>
<svg style="left:216.0px;top:103px" width="17" height="17" viewBox="0 0 17 17"><path d="M7.400 2.600 L13.300 7.600 L8 12.500 L2.500 7.400Z" fill="#fff" stroke="#666" stroke-width="1"/><path d="M5.800 3.800 C5 0.400 9 0 9.200 3.600" fill="none" stroke="#666" stroke-width="0.9"/><path d="M12.800 5.400 C14.800 6.600 15.600 9 14.400 11.200 C13.600 9.800 13.200 8.400 12 7Z" fill="#3d75bd"/><rect x="0" y="12.700" width="16.100" height="4.200" fill="#ffff00"/></svg>
<svg style="left:236.7px;top:110.2px" width="5" height="3" viewBox="0 0 5 3"><path d="M0 0 H5 L2.5 3Z" fill="#707070"/></svg>
<div class="t" style="left:249.5px;top:104px;font-size:11.5px;line-height:12px;color:#505050">가</div>
<div style="left:247.0px;top:115.700px;width:16px;height:4.200px;background:#ff0000"></div>
<svg style="left:268.0px;top:110.2px" width="5" height="3" viewBox="0 0 5 3"><path d="M0 0 H5 L2.5 3Z" fill="#707070"/></svg>
<div style="left:279.0px;top:103.0px;width:1px;height:17.0px;background:#dadada"></div>
<div class="t" style="left:286.7px;top:104.3px;font-size:6.200px;line-height:6px;color:#444;letter-spacing:.3px">내천</div>
<div class="t" style="left:291.5px;top:111.500px;font-size:7px;line-height:7px;color:#2f68b3;font-weight:bold">川</div>
<svg style="left:306.2px;top:110.2px" width="5" height="3" viewBox="0 0 5 3"><path d="M0 0 H5 L2.5 3Z" fill="#707070"/></svg>
<div class="t" style="left:185.0px;top:135.500px;font-size:12px;line-height:14px;color:#636363"><span class="kx12">글꼴</span></div>
<svg style="left:306.8px;top:141px" width="6" height="6" viewBox="0 0 6 6"><path d="M0.5 4 V0.500 H4" fill="none" stroke="#777" stroke-width="1"/><path d="M2 2 L5.5 5.5 M5.5 2.500 V5.5 H2.500" fill="none" stroke="#777" stroke-width="1"/></svg>
<div style="left:318.0px;top:64.0px;width:1px;height:83.5px;background:#dadada"></div>
<div style="left:324.8px;top:74.8px;width:14.2px;height:1.2px;background:#737373"></div>
<div style="left:326.6px;top:77.2px;width:10.7px;height:1.2px;background:#a9a9a9"></div>
<div style="left:324.8px;top:79.6px;width:14.2px;height:1.2px;background:#737373"></div>
<div style="left:342.0px;top:72px;width:21px;height:21px;background:#c6c6c6"></div>
<div style="left:345.4px;top:77.9px;width:14.6px;height:1.2px;background:#6a6a6a"></div>
<div style="left:347.3px;top:80.5px;width:10.7px;height:1.2px;background:#8c8c8c"></div>
<div style="left:345.4px;top:83.0px;width:14.6px;height:1.2px;background:#6a6a6a"></div>
<div style="left:347.3px;top:85.3px;width:10.7px;height:1.2px;background:#8c8c8c"></div>
<div style="left:366.0px;top:81.0px;width:14.8px;height:1.2px;background:#737373"></div>
<div style="left:368.3px;top:83.6px;width:10.7px;height:1.2px;background:#a9a9a9"></div>
<div style="left:366.0px;top:86.0px;width:14.8px;height:1.2px;background:#737373"></div>
<div style="left:368.3px;top:88.4px;width:10.7px;height:1.2px;background:#a9a9a9"></div>
<div style="left:387.0px;top:73.5px;width:1px;height:17.2px;background:#dadada"></div>
<div class="t" style="left:391.5px;top:75.2px;width:18px;font-size:8.800px;line-height:9px;color:#555;transform:rotate(-42deg);transform-origin:50% 50%;letter-spacing:-.3px">가나</div>
<svg style="left:399.8px;top:80px" width="10" height="10" viewBox="0 0 10 10"><path d="M1 8.800 L8.200 2" stroke="#666" stroke-width="1.200" fill="none"/><path d="M8.800 1.300 L5.800 2.300 L7.900 4.400Z" fill="#666"/></svg>
<svg style="left:412.8px;top:80.8px" width="5" height="3" viewBox="0 0 5 3"><path d="M0 0 H5 L2.5 3Z" fill="#707070"/></svg>
<div style="left:436.0px;top:75.2px;width:1px;height:43.8px;background:#dadada"></div>
<svg style="left:442.8px;top:75px" width="16" height="15" viewBox="0 0 16 15"><path d="M0.5 0.500 H9.700 V14.200 H0.5Z" fill="#fff" stroke="#8a8a8a"/><rect x="1" y="1" width="8.200" height="2" fill="#a9c6e8"/><path d="M0.5 4.800 H9.700" stroke="#8a8a8a" stroke-width="1"/><path d="M2 8.800 H8 M2 11.400 H8" stroke="#4a7fc0" stroke-width="1"/><path d="M10.500 1.800 H12.300 C15.800 1.800 15.800 7.600 12.300 7.600 H10.800" fill="none" stroke="#3d75bd" stroke-width="1.400"/><path d="M11.800 5.200 L8.800 7.600 L11.800 10Z" fill="#3d75bd"/></svg>
<div class="t" style="left:461.8px;top:75.500px;font-size:12px;line-height:14px;color:#444"><span class="kx12">텍스트</span> <span class="kx12">줄</span> <span class="kx12">바꿈</span></div>
<svg style="left:442.0px;top:103.500px" width="16" height="16" viewBox="0 0 16 16"><path d="M0.5 0.500 H15.500 V15.300 H0.5Z" fill="#fff" stroke="#7a7a7a" stroke-width="1"/><path d="M0.500 3.800 H15.500 M0.500 12 H15.500 M8 0.500 V3.800 M8 12 V15.300" fill="none" stroke="#7a7a7a" stroke-width="1"/><path d="M2.500 7.900 H13.500" stroke="#3d75bd" stroke-width="1.300" fill="none"/><path d="M4.600 5.600 L2 7.900 L4.600 10.200Z M11.400 5.600 L14 7.900 L11.400 10.200Z" fill="#3d75bd"/></svg>
<div class="t" style="left:461.8px;top:104.800px;font-size:12px;line-height:14px;color:#444"><span class="kx12">병합하고</span> <span class="kx12">가운데</span> <span class="kx12">맞춤</span></div>
<svg style="left:584.5px;top:110.2px" width="5" height="3" viewBox="0 0 5 3"><path d="M0 0 H5 L2.5 3Z" fill="#707070"/></svg>
<div style="left:326.3px;top:107.7px;width:11.3px;height:1.2px;background:#737373"></div>
<div style="left:346.2px;top:107.7px;width:12.9px;height:1.2px;background:#737373"></div>
<div style="left:367.9px;top:107.7px;width:11.1px;height:1.2px;background:#737373"></div>
<div style="left:326.3px;top:110.1px;width:8.8px;height:1.2px;background:#737373"></div>
<div style="left:348.8px;top:110.1px;width:7.9px;height:1.2px;background:#737373"></div>
<div style="left:370.1px;top:110.1px;width:8.9px;height:1.2px;background:#737373"></div>
<div style="left:326.3px;top:112.5px;width:11.3px;height:1.2px;background:#a9a9a9"></div>
<div style="left:346.2px;top:112.5px;width:12.9px;height:1.2px;background:#a9a9a9"></div>
<div style="left:367.9px;top:112.5px;width:11.1px;height:1.2px;background:#a9a9a9"></div>
<div style="left:326.3px;top:114.9px;width:8.8px;height:1.2px;background:#737373"></div>
<div style="left:348.8px;top:114.9px;width:7.9px;height:1.2px;background:#737373"></div>
<div style="left:370.1px;top:114.9px;width:8.9px;height:1.2px;background:#737373"></div>
<div style="left:387.0px;top:103.0px;width:1px;height:17.3px;background:#dadada"></div>
<div style="left:394.1px;top:105.0px;width:14.8px;height:1.2px;background:#8a8a8a"></div>
<div style="left:394.1px;top:117.2px;width:14.8px;height:1.2px;background:#8a8a8a"></div>
<div style="left:401.5px;top:107.7px;width:7.4px;height:1.2px;background:#9a9a9a"></div>
<div style="left:401.5px;top:110.1px;width:7.4px;height:1.2px;background:#8a8a8a"></div>
<div style="left:401.5px;top:112.5px;width:7.4px;height:1.2px;background:#9a9a9a"></div>
<div style="left:401.5px;top:114.9px;width:7.4px;height:1.2px;background:#8a8a8a"></div>
<svg style="left:393.9px;top:108px" width="8" height="8" viewBox="0 0 8 8"><path d="M7.200 3.800 H2" stroke="#3d75bd" stroke-width="1.800" fill="none"/><path d="M4.200 0.300 L0.200 3.800 L4.200 7.300 L4.200 5.600 L2.600 3.800 L4.200 2Z" fill="#3d75bd"/></svg>
<div style="left:415.0px;top:105.0px;width:14.8px;height:1.2px;background:#8a8a8a"></div>
<div style="left:415.0px;top:117.2px;width:14.8px;height:1.2px;background:#8a8a8a"></div>
<div style="left:422.4px;top:107.7px;width:7.4px;height:1.2px;background:#9a9a9a"></div>
<div style="left:422.4px;top:110.1px;width:7.4px;height:1.2px;background:#8a8a8a"></div>
<div style="left:422.4px;top:112.5px;width:7.4px;height:1.2px;background:#9a9a9a"></div>
<div style="left:422.4px;top:114.9px;width:7.4px;height:1.2px;background:#8a8a8a"></div>
<svg style="left:414.8px;top:108px" width="8" height="8" viewBox="0 0 8 8"><path d="M0.300 3.800 H5.500" stroke="#3d75bd" stroke-width="1.800" fill="none"/><path d="M3.300 0.300 L7.300 3.800 L3.300 7.300 L3.300 5.600 L4.900 3.800 L3.300 2Z" fill="#3d75bd"/></svg>
<div class="t" style="left:438.0px;top:135.500px;font-size:12px;line-height:14px;color:#636363"><span class="kx12">맞춤</span></div>
<svg style="left:585.7px;top:141px" width="6" height="6" viewBox="0 0 6 6"><path d="M0.5 4 V0.500 H4" fill="none" stroke="#777" stroke-width="1"/><path d="M2 2 L5.5 5.5 M5.5 2.500 V5.5 H2.500" fill="none" stroke="#777" stroke-width="1"/></svg>
<div style="left:5.8px;top:161px;width:101px;height:29px;background:#fff;border:1px solid #d8d8d8"></div>
<div class="t" style="left:11.0px;top:169px;font-size:13.5px;line-height:16px;color:#444">K12</div>
<svg style="left:95.5px;top:173.5px" width="5" height="3" viewBox="0 0 5 3"><path d="M0 0 H5 L2.5 3Z" fill="#666"/></svg>
<div style="left:121.3px;top:171.0px;width:1.500px;height:1.500px;background:#999"></div>
<div style="left:121.3px;top:175.0px;width:1.500px;height:1.500px;background:#999"></div>
<div style="left:121.3px;top:179.0px;width:1.500px;height:1.500px;background:#999"></div>
<div style="left:137.3px;top:161px;width:108.7px;height:29px;background:#fff;border:1px solid #d8d8d8"></div>
<svg style="left:148.8px;top:170.5px" width="12" height="10" viewBox="0 0 12 10"><path d="M0.5 0.500 L11.500 9.500 M11.500 0.500 L0.5 9.500" stroke="#a8a8a8" stroke-width="1.5"/></svg>
<svg style="left:184.6px;top:170.5px" width="13" height="10" viewBox="0 0 13 10"><path d="M0.6 5.600 L4.200 9 L12.400 0.600" fill="none" stroke="#a8a8a8" stroke-width="1.6"/></svg>
<div class="t" style="left:220.5px;top:166px;font-family:'Liberation Serif',serif;font-style:italic;font-weight:bold;font-size:16px;line-height:18px;color:#555;letter-spacing:-1px">f<span style="font-size:12px">x</span></div>
<div style="left:249.4px;top:161px;width:360px;height:29px;background:#fff;border:1px solid #d8d8d8"></div>
<div style="left:31.0px;top:218px;width:570px;height:380px;background:#fff"></div>
<div style="left:30.0px;top:199px;width:1px;height:19px;background:#c9c9c9"></div>
<div style="left:30.0px;top:218px;width:1px;height:380px;background:#d6d6d6"></div>
<div style="left:114.0px;top:199px;width:1px;height:19px;background:#c9c9c9"></div>
<div style="left:114.0px;top:218px;width:1px;height:380px;background:#d6d6d6"></div>
<div style="left:206.0px;top:199px;width:1px;height:19px;background:#c9c9c9"></div>
<div style="left:206.0px;top:218px;width:1px;height:380px;background:#d6d6d6"></div>
<div style="left:335.0px;top:199px;width:1px;height:19px;background:#c9c9c9"></div>
<div style="left:335.0px;top:218px;width:1px;height:380px;background:#d6d6d6"></div>
<div style="left:434.0px;top:199px;width:1px;height:19px;background:#c9c9c9"></div>
<div style="left:434.0px;top:218px;width:1px;height:380px;background:#d6d6d6"></div>
<div style="left:505.0px;top:199px;width:1px;height:19px;background:#c9c9c9"></div>
<div style="left:505.0px;top:218px;width:1px;height:380px;background:#d6d6d6"></div>
<div style="left:30.0px;top:218px;width:1px;height:380px;background:#c4c4c4"></div>
<div style="left:31.0px;top:245.0px;width:570px;height:1px;background:#d6d6d6"></div>
<div style="left:1px;top:245.0px;width:29px;height:1px;background:#c9c9c9"></div>
<div style="left:31.0px;top:268.0px;width:570px;height:1px;background:#d6d6d6"></div>
<div style="left:1px;top:268.0px;width:29px;height:1px;background:#c9c9c9"></div>
<div style="left:31.0px;top:291.0px;width:570px;height:1px;background:#d6d6d6"></div>
<div style="left:1px;top:291.0px;width:29px;height:1px;background:#c9c9c9"></div>
<div style="left:31.0px;top:314.0px;width:570px;height:1px;background:#d6d6d6"></div>
<div style="left:1px;top:314.0px;width:29px;height:1px;background:#c9c9c9"></div>
<div style="left:31.0px;top:338.0px;width:570px;height:1px;background:#d6d6d6"></div>
<div style="left:1px;top:338.0px;width:29px;height:1px;background:#c9c9c9"></div>
<div style="left:31.0px;top:361.0px;width:570px;height:1px;background:#d6d6d6"></div>
<div style="left:1px;top:361.0px;width:29px;height:1px;background:#c9c9c9"></div>
<div style="left:31.0px;top:384.0px;width:570px;height:1px;background:#d6d6d6"></div>
<div style="left:1px;top:384.0px;width:29px;height:1px;background:#c9c9c9"></div>
<div style="left:31.0px;top:407.0px;width:570px;height:1px;background:#d6d6d6"></div>
<div style="left:1px;top:407.0px;width:29px;height:1px;background:#c9c9c9"></div>
<div style="left:31.0px;top:430.0px;width:570px;height:1px;background:#d6d6d6"></div>
<div style="left:1px;top:430.0px;width:29px;height:1px;background:#c9c9c9"></div>
<div style="left:31.0px;top:453.0px;width:570px;height:1px;background:#d6d6d6"></div>
<div style="left:1px;top:453.0px;width:29px;height:1px;background:#c9c9c9"></div>
<div style="left:31.0px;top:477.0px;width:570px;height:1px;background:#d6d6d6"></div>
<div style="left:1px;top:477.0px;width:29px;height:1px;background:#c9c9c9"></div>
<div style="left:31.0px;top:500.0px;width:570px;height:1px;background:#d6d6d6"></div>
<div style="left:1px;top:500.0px;width:29px;height:1px;background:#c9c9c9"></div>
<div style="left:31.0px;top:523.0px;width:570px;height:1px;background:#d6d6d6"></div>
<div style="left:1px;top:523.0px;width:29px;height:1px;background:#c9c9c9"></div>
<div style="left:31.0px;top:546.0px;width:570px;height:1px;background:#d6d6d6"></div>
<div style="left:1px;top:546.0px;width:29px;height:1px;background:#c9c9c9"></div>
<div style="left:31.0px;top:569.0px;width:570px;height:1px;background:#d6d6d6"></div>
<div style="left:1px;top:569.0px;width:29px;height:1px;background:#c9c9c9"></div>
<div style="left:31.0px;top:592.0px;width:570px;height:1px;background:#d6d6d6"></div>
<div style="left:1px;top:592.0px;width:29px;height:1px;background:#c9c9c9"></div>
<svg style="left:11.8px;top:203px" width="16.500" height="15.500" viewBox="0 0 16.500 15.5"><path d="M16.5 0 V15.5 H0Z" fill="#b4b4b4"/></svg>
<div class="t" style="left:51.9px;top:201.5px;width:40px;text-align:center;font-size:13.5px;line-height:16px;color:#444">A</div>
<div class="t" style="left:140.4px;top:201.5px;width:40px;text-align:center;font-size:13.5px;line-height:16px;color:#444">B</div>
<div class="t" style="left:250.9px;top:201.5px;width:40px;text-align:center;font-size:13.5px;line-height:16px;color:#444">C</div>
<div class="t" style="left:364.9px;top:201.5px;width:40px;text-align:center;font-size:13.5px;line-height:16px;color:#444">D</div>
<div class="t" style="left:449.9px;top:201.5px;width:40px;text-align:center;font-size:13.5px;line-height:16px;color:#444">E</div>
<div class="t" style="left:529.0px;top:201.5px;width:40px;text-align:center;font-size:13.5px;line-height:16px;color:#444">F</div>
<div style="left:1px;top:478.0px;width:29px;height:22px;background:#d4d4d4"></div>
<div style="left:29.7px;top:477.0px;width:1.3px;height:23px;background:#217346"></div>
<div class="t" style="left:1px;top:225.5px;width:30px;text-align:center;font-size:13.5px;line-height:16px;color:#444">1</div>
<div class="t" style="left:1px;top:249.5px;width:30px;text-align:center;font-size:13.5px;line-height:16px;color:#444">2</div>
<div class="t" style="left:1px;top:272.5px;width:30px;text-align:center;font-size:13.5px;line-height:16px;color:#444">3</div>
<div class="t" style="left:1px;top:295.5px;width:30px;text-align:center;font-size:13.5px;line-height:16px;color:#444">4</div>
<div class="t" style="left:1px;top:318.5px;width:30px;text-align:center;font-size:13.5px;line-height:16px;color:#444">5</div>
<div class="t" style="left:1px;top:342.5px;width:30px;text-align:center;font-size:13.5px;line-height:16px;color:#444">6</div>
<div class="t" style="left:1px;top:365.5px;width:30px;text-align:center;font-size:13.5px;line-height:16px;color:#444">7</div>
<div class="t" style="left:1px;top:388.5px;width:30px;text-align:center;font-size:13.5px;line-height:16px;color:#444">8</div>
<div class="t" style="left:1px;top:411.5px;width:30px;text-align:center;font-size:13.5px;line-height:16px;color:#444">9</div>
<div class="t" style="left:1px;top:434.5px;width:30px;text-align:center;font-size:13.5px;line-height:16px;color:#444">10</div>
<div class="t" style="left:1px;top:457.5px;width:30px;text-align:center;font-size:13.5px;line-height:16px;color:#444">11</div>
<div class="t" style="left:1px;top:481.5px;width:30px;text-align:center;font-size:13.5px;line-height:16px;color:#217346">12</div>
<div class="t" style="left:1px;top:504.5px;width:30px;text-align:center;font-size:13.5px;line-height:16px;color:#444">13</div>
<div class="t" style="left:1px;top:527.5px;width:30px;text-align:center;font-size:13.5px;line-height:16px;color:#444">14</div>
<div class="t" style="left:1px;top:550.5px;width:30px;text-align:center;font-size:13.5px;line-height:16px;color:#444">15</div>
<div class="t" style="left:1px;top:573.5px;width:30px;text-align:center;font-size:13.5px;line-height:16px;color:#444">16</div>
<div class="t" style="left:34.3px;top:225.0px;font-size:14.2px;line-height:16px;color:#262626"><span class="kx">약정코드</span></div>
<div class="t" style="left:118.3px;top:225.0px;font-size:14.2px;line-height:16px;color:#262626"><span class="kx">구성원코드</span></div>
<div class="t" style="left:210.3px;top:225.0px;font-size:14.2px;line-height:16px;color:#262626"><span class="kx">구성원명</span></div>
<div class="t" style="left:339.3px;top:225.0px;font-size:14.2px;line-height:16px;color:#262626"><span class="kx">생애주기단계</span></div>
<div class="t" style="left:438.3px;top:225.0px;font-size:14.2px;line-height:16px;color:#262626"><span class="kx">약정상태</span></div>
<div class="t" style="left:509.3px;top:225.0px;font-size:14.2px;line-height:16px;color:#262626"><span class="kx">약정일</span></div>
<div class="t" style="left:33.5px;top:249.0px;font-size:14.2px;line-height:16px;color:#262626">C21000108</div>
<div class="t" style="left:114.0px;top:249.0px;width:89.4px;text-align:right;font-size:14.2px;line-height:16px;color:#262626">2021010050</div>
<div class="t" style="left:210.3px;top:249.0px;font-size:14.2px;line-height:16px;color:#262626"><span class="kx">구성원</span> <span class="kx">일괄</span>5</div>
<div class="t" style="left:339.3px;top:249.0px;font-size:14.2px;line-height:16px;color:#262626"><span class="kx">등록</span></div>
<div class="t" style="left:438.3px;top:249.0px;font-size:14.2px;line-height:16px;color:#262626"><span class="kx">종료</span></div>
<div class="t" style="left:514.5px;top:249.0px;font-size:14.2px;line-height:16px;color:#262626">2021-01-29</div>
<div class="t" style="left:33.5px;top:272.0px;font-size:14.2px;line-height:16px;color:#262626">C21000107</div>
<div class="t" style="left:114.0px;top:272.0px;width:89.4px;text-align:right;font-size:14.2px;line-height:16px;color:#262626">2021010049</div>
<div class="t" style="left:210.3px;top:272.0px;font-size:14.2px;line-height:16px;color:#262626"><span class="kx">구성원</span> <span class="kx">일괄</span>4</div>
<div class="t" style="left:339.3px;top:272.0px;font-size:14.2px;line-height:16px;color:#262626"><span class="kx">등록</span></div>
<div class="t" style="left:438.3px;top:272.0px;font-size:14.2px;line-height:16px;color:#262626"><span class="kx">종료</span></div>
<div class="t" style="left:514.5px;top:272.0px;font-size:14.2px;line-height:16px;color:#262626">2021-01-29</div>
<div class="t" style="left:33.5px;top:295.0px;font-size:14.2px;line-height:16px;color:#262626">C21000106</div>
<div class="t" style="left:114.0px;top:295.0px;width:89.4px;text-align:right;font-size:14.2px;line-height:16px;color:#262626">2021010048</div>
<div class="t" style="left:210.3px;top:295.0px;font-size:14.2px;line-height:16px;color:#262626"><span class="kx">구성원</span> <span class="kx">일괄</span>3</div>
<div class="t" style="left:339.3px;top:295.0px;font-size:14.2px;line-height:16px;color:#262626"><span class="kx">등록</span></div>
<div class="t" style="left:438.3px;top:295.0px;font-size:14.2px;line-height:16px;color:#262626"><span class="kx">종료</span></div>
<div class="t" style="left:514.5px;top:295.0px;font-size:14.2px;line-height:16px;color:#262626">2021-01-29</div>
<div class="t" style="left:33.5px;top:318.0px;font-size:14.2px;line-height:16px;color:#262626">C21000105</div>
<div class="t" style="left:114.0px;top:318.0px;width:89.4px;text-align:right;font-size:14.2px;line-height:16px;color:#262626">2021010047</div>
<div class="t" style="left:210.3px;top:318.0px;font-size:14.2px;line-height:16px;color:#262626"><span class="kx">구성원</span> <span class="kx">일괄</span>2</div>
<div class="t" style="left:339.3px;top:318.0px;font-size:14.2px;line-height:16px;color:#262626"><span class="kx">등록</span></div>
<div class="t" style="left:438.3px;top:318.0px;font-size:14.2px;line-height:16px;color:#262626"><span class="kx">종료</span></div>
<div class="t" style="left:514.5px;top:318.0px;font-size:14.2px;line-height:16px;color:#262626">2021-01-29</div>
<div class="t" style="left:33.5px;top:342.0px;font-size:14.2px;line-height:16px;color:#262626">C21000104</div>
<div class="t" style="left:114.0px;top:342.0px;width:89.4px;text-align:right;font-size:14.2px;line-height:16px;color:#262626">2021010046</div>
<div class="t" style="left:210.3px;top:342.0px;font-size:14.2px;line-height:16px;color:#262626"><span class="kx">구성원</span> <span class="kx">일괄</span>1</div>
<div class="t" style="left:339.3px;top:342.0px;font-size:14.2px;line-height:16px;color:#262626"><span class="kx">등록</span></div>
<div class="t" style="left:438.3px;top:342.0px;font-size:14.2px;line-height:16px;color:#262626"><span class="kx">종료</span></div>
<div class="t" style="left:514.5px;top:342.0px;font-size:14.2px;line-height:16px;color:#262626">2021-01-29</div>
<div class="t" style="left:33.5px;top:365.0px;font-size:14.2px;line-height:16px;color:#262626">C21000103</div>
<div class="t" style="left:114.0px;top:365.0px;width:89.4px;text-align:right;font-size:14.2px;line-height:16px;color:#262626">2021010051</div>
<div class="t" style="left:210.3px;top:365.0px;font-size:14.2px;line-height:16px;color:#262626"><span class="kx">구성원</span> <span class="kx">약정신규</span>6</div>
<div class="t" style="left:339.3px;top:365.0px;font-size:14.2px;line-height:16px;color:#262626"><span class="kx">등록</span></div>
<div class="t" style="left:438.3px;top:365.0px;font-size:14.2px;line-height:16px;color:#262626"><span class="kx">정상</span></div>
<div class="t" style="left:514.5px;top:365.0px;font-size:14.2px;line-height:16px;color:#262626">2021-01-28</div>
<div class="t" style="left:33.5px;top:388.0px;font-size:14.2px;line-height:16px;color:#262626">C21000102</div>
<div class="t" style="left:114.0px;top:388.0px;width:89.4px;text-align:right;font-size:14.2px;line-height:16px;color:#262626">2021010050</div>
<div class="t" style="left:210.3px;top:388.0px;font-size:14.2px;line-height:16px;color:#262626"><span class="kx">구성원</span> <span class="kx">일괄</span>5</div>
<div class="t" style="left:339.3px;top:388.0px;font-size:14.2px;line-height:16px;color:#262626"><span class="kx">등록</span></div>
<div class="t" style="left:438.3px;top:388.0px;font-size:14.2px;line-height:16px;color:#262626"><span class="kx">종료</span></div>
<div class="t" style="left:514.5px;top:388.0px;font-size:14.2px;line-height:16px;color:#262626">2021-01-28</div>
<div class="t" style="left:33.5px;top:411.0px;font-size:14.2px;line-height:16px;color:#262626">C21000101</div>
<div class="t" style="left:114.0px;top:411.0px;width:89.4px;text-align:right;font-size:14.2px;line-height:16px;color:#262626">2021010049</div>
<div class="t" style="left:210.3px;top:411.0px;font-size:14.2px;line-height:16px;color:#262626"><span class="kx">구성원</span> <span class="kx">일괄</span>4</div>
<div class="t" style="left:339.3px;top:411.0px;font-size:14.2px;line-height:16px;color:#262626"><span class="kx">등록</span></div>
<div class="t" style="left:438.3px;top:411.0px;font-size:14.2px;line-height:16px;color:#262626"><span class="kx">종료</span></div>
<div class="t" style="left:514.5px;top:411.0px;font-size:14.2px;line-height:16px;color:#262626">2021-01-28</div>
<div class="t" style="left:33.5px;top:434.0px;font-size:14.2px;line-height:16px;color:#262626">C21000100</div>
<div class="t" style="left:114.0px;top:434.0px;width:89.4px;text-align:right;font-size:14.2px;line-height:16px;color:#262626">2021010048</div>
<div class="t" style="left:210.3px;top:434.0px;font-size:14.2px;line-height:16px;color:#262626"><span class="kx">구성원</span> <span class="kx">일괄</span>3</div>
<div class="t" style="left:339.3px;top:434.0px;font-size:14.2px;line-height:16px;color:#262626"><span class="kx">등록</span></div>
<div class="t" style="left:438.3px;top:434.0px;font-size:14.2px;line-height:16px;color:#262626"><span class="kx">종료</span></div>
<div class="t" style="left:514.5px;top:434.0px;font-size:14.2px;line-height:16px;color:#262626">2021-01-28</div>
<div class="t" style="left:33.5px;top:457.0px;font-size:14.2px;line-height:16px;color:#262626">C21000099</div>
<div class="t" style="left:114.0px;top:457.0px;width:89.4px;text-align:right;font-size:14.2px;line-height:16px;color:#262626">2021010047</div>
<div class="t" style="left:210.3px;top:457.0px;font-size:14.2px;line-height:16px;color:#262626"><span class="kx">구성원</span> <span class="kx">일괄</span>2</div>
<div class="t" style="left:339.3px;top:457.0px;font-size:14.2px;line-height:16px;color:#262626"><span class="kx">등록</span></div>
<div class="t" style="left:438.3px;top:457.0px;font-size:14.2px;line-height:16px;color:#262626"><span class="kx">종료</span></div>
<div class="t" style="left:514.5px;top:457.0px;font-size:14.2px;line-height:16px;color:#262626">2021-01-28</div>
<div style="left:28.0px;top:216.700px;width:563px;height:264.200px;border:solid #ec1c24;border-width:4.3px 5px 4.1px 4px"></div>
<div style="left:0;top:3px;width:1px;height:590px;background:#217346"></div>
</div>
</body></html>
